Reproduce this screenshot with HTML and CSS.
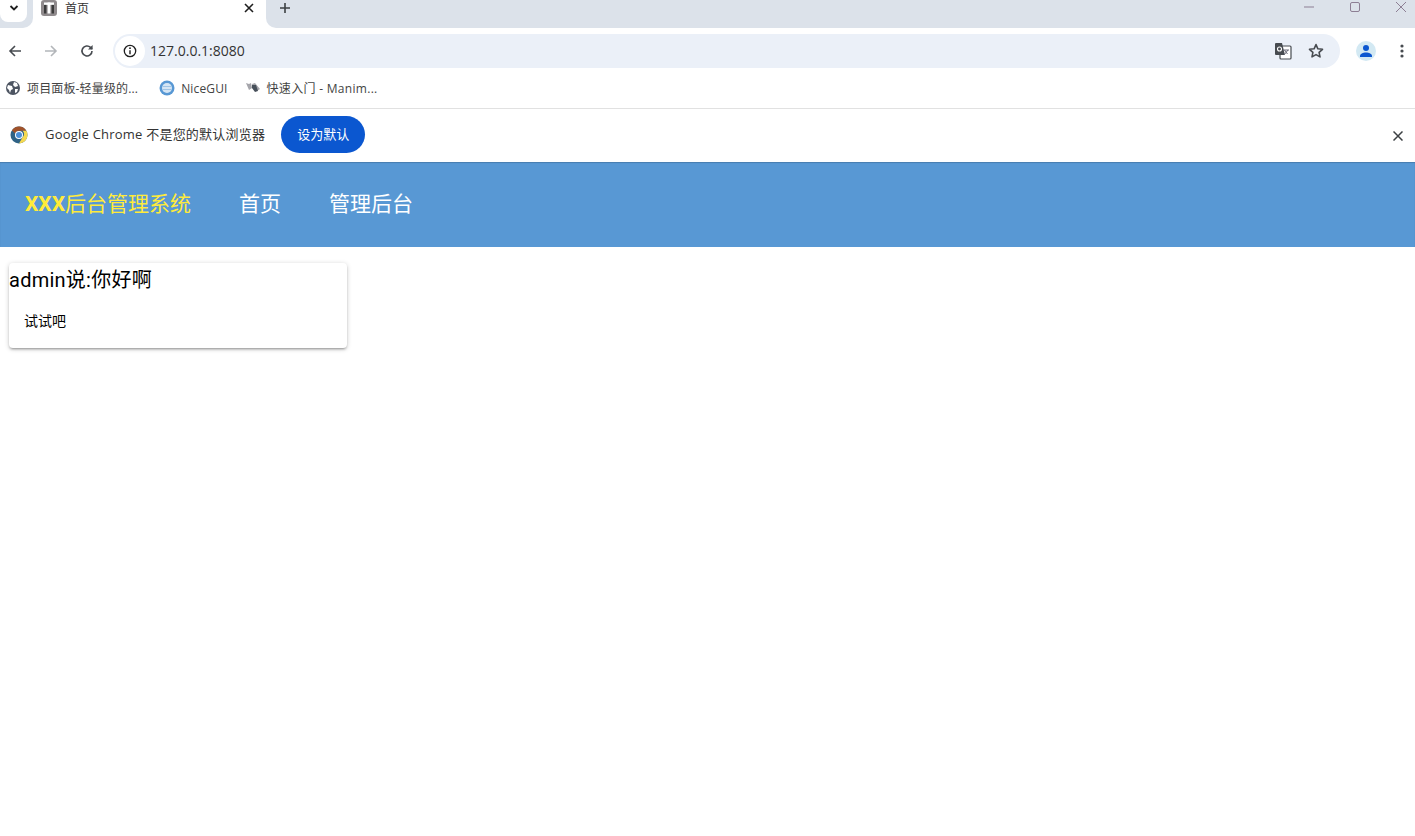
FILE: index.html
```html
<!DOCTYPE html>
<html lang="zh-CN">
<head>
<meta charset="utf-8">
<title>首页</title>
<link rel="stylesheet" href="styles.css">
</head>
<body>
<div class="tabstrip">
  <div class="tabsearch-wrap">
    <div class="tabsearch">
      <svg width="12" height="12" viewBox="0 0 12 12"><path d="M2.5 4 6 7.500 9.500 4" fill="none" stroke="#1f1f1f" stroke-width="1.800"/></svg>
    </div>
  </div>
  <div class="tab">
    <svg class="favicon" width="16" height="16" viewBox="0 0 16 16"><rect x="0" y="0" width="16" height="16" rx="3" fill="#8f8a8c"/><rect x="3" y="2.500" width="10" height="2.400" fill="#fff"/><rect x="6.600" y="2.500" width="2.800" height="11" fill="#fff"/><rect x="3" y="4.900" width="2.400" height="8.600" fill="#3b3b3b"/><rect x="10.600" y="4.900" width="2.400" height="8.600" fill="#3b3b3b"/></svg>
    <span class="tab-title">首页</span>
    <svg class="tab-close" width="10" height="10" viewBox="0 0 10 10"><path d="M1 1 9 9M9 1 1 9" stroke="#1f1f1f" stroke-width="1.600"/></svg>
  </div>
  <div class="strip-rest">
    <svg class="newtab" width="12" height="12" viewBox="0 0 12 12"><path d="M6 1v10M1 6h10" stroke="#3c4043" stroke-width="1.600"/></svg>
    <div class="winctrls">
      <svg width="12" height="12" viewBox="0 0 12 12"><path d="M1 6h10" stroke="#8d7f94" stroke-width="1"/></svg>
      <svg width="12" height="12" viewBox="0 0 12 12"><rect x="1.500" y="1.500" width="9" height="9" rx="1.500" fill="none" stroke="#8d7f94" stroke-width="1"/></svg>
      <svg width="12" height="12" viewBox="0 0 12 12"><path d="M1 1 11 11M11 1 1 11" stroke="#8d7f94" stroke-width="1"/></svg>
    </div>
  </div>
</div>

<div class="toolbar">
  <svg class="navicon" width="16" height="16" viewBox="0 0 16 16"><path d="M14 8H3M8 3 3 8l5 5" fill="none" stroke="#474b50" stroke-width="1.600"/></svg>
  <svg class="navicon" width="16" height="16" viewBox="0 0 16 16"><path d="M2 8h11M8 3l5 5-5 5" fill="none" stroke="#b3b6ba" stroke-width="1.600"/></svg>
  <svg class="navicon" width="16" height="16" viewBox="0 0 16 16"><path d="M13 8a5 5 0 1 1-1.500-3.600L13 6" fill="none" stroke="#474b50" stroke-width="1.600"/><path d="M13.600 2v4.600H9z" fill="#474b50"/></svg>
  <div class="omnibox">
    <div class="siteinfo">
      <svg width="14" height="14" viewBox="0 0 14 14"><circle cx="7" cy="7" r="5.700" fill="none" stroke="#1f1f1f" stroke-width="1.300"/><path d="M7 6.200v4" stroke="#1f1f1f" stroke-width="1.400"/><circle cx="7" cy="4.200" r=".9" fill="#1f1f1f"/></svg>
    </div>
    <span class="url">127.0.0.1:8080</span>
    <svg class="translate" width="18" height="18" viewBox="0 0 18 18"><rect x="6" y="4" width="11" height="13" rx="1" fill="#fff" stroke="#474b50" stroke-width="1.200"/><path d="M1 2a1 1 0 0 1 1-1h6l3 12H2a1 1 0 0 1-1-1z" fill="#474b50"/><circle cx="5.500" cy="7" r="2" fill="none" stroke="#fff" stroke-width="1.100"/><path d="M9 8h6M10.500 8l3 4M14 8l-4 5" stroke="#6b6b78" stroke-width="1"/></svg>
    <svg class="star" width="18" height="18" viewBox="0 0 18 18"><path d="M9 2.600l1.900 4.200 4.600.5-3.400 3.100.9 4.500-4-2.300-4 2.300.9-4.500-3.400-3.100 4.600-.5z" fill="none" stroke="#474b50" stroke-width="1.600" stroke-linejoin="round"/></svg>
  </div>
  <div class="avatar">
    <svg width="14" height="14" viewBox="0 0 14 14"><circle cx="7" cy="4" r="3" fill="#0b57d0"/><path d="M1 13v-1.200C1 9.800 4 8.400 7 8.400s6 1.400 6 3.400V13z" fill="#0b57d0"/></svg>
  </div>
  <svg class="menu" width="4" height="16" viewBox="0 0 4 16"><circle cx="2" cy="3" r="1.600" fill="#474b50"/><circle cx="2" cy="8" r="1.600" fill="#474b50"/><circle cx="2" cy="13" r="1.600" fill="#474b50"/></svg>
</div>

<div class="bookmarks">
  <div class="bm">
    <svg width="16" height="16" viewBox="0 0 16 16"><circle cx="8" cy="8" r="7" fill="#4d5562"/><path d="M3 5l4 1 1 3-2 1-1 3-1-3-2-2zM9 2l3 1 1 3-3 1-2-2zM10 9l3 0-1 3-2 1z" fill="#fff"/></svg>
    <span>项目面板-轻量级的...</span>
  </div>
  <div class="bm">
    <svg width="16" height="16" viewBox="0 0 16 16"><circle cx="8" cy="8" r="7.500" fill="#5898d4"/><circle cx="8" cy="8" r="5" fill="#d5e5f4"/><path d="M3.500 6.500h9M3.500 9.500h9" stroke="#9fc4e6" stroke-width="1"/></svg>
    <span>NiceGUI</span>
  </div>
  <div class="bm bm-manim">
    <svg width="16" height="16" viewBox="0 0 16 16"><path d="M1 3l3 1 2-1 1 5-3 2zM7 4l3-1 5 6-3 2-4-2z" fill="#a5a5ab"/><path d="M7 5l4 0 2 6-3 1-3-4z" fill="#47505a"/></svg>
    <span>快速入门 - Manim...</span>
  </div>
</div>

<div class="infobar">
  <svg class="chrome-logo" width="18" height="18" viewBox="0 0 18 18"><circle cx="9" cy="9" r="8.500" fill="#2f6285"/><path d="M9 .5a8.500 8.500 0 0 1 7.400 4.300H9a4.200 4.200 0 0 0-4 2.700L1.900 4.300A8.500 8.500 0 0 1 9 .5z" fill="#a0522a"/><path d="M16.400 4.800A8.500 8.500 0 0 1 9 17.500l3.600-6.300a4.200 4.200 0 0 0 0-6.400z" fill="#f6d94e"/><circle cx="9" cy="9" r="4" fill="#fff"/><circle cx="9" cy="9" r="3" fill="#4a8fd8"/></svg>
  <span class="info-text">Google Chrome 不是您的默认浏览器</span>
  <button class="default-btn">设为默认</button>
  <svg class="info-close" width="10" height="10" viewBox="0 0 10 10"><path d="M.5.5l9 9M9.500.5l-9 9" stroke="#3c4043" stroke-width="1.500"/></svg>
</div>

<header class="app-header">
  <a class="brand"><b>XXX</b>后台管理系统</a>
  <a class="nav-link">首页</a>
  <a class="nav-link">管理后台</a>
</header>

<main class="content">
  <section class="card">
    <div class="card-title">admin说:你好啊</div>
    <div class="card-body">试试吧</div>
  </section>
</main>
</body>
</html>
```

FILE: styles.css
```css
* { box-sizing: border-box; }
html, body { margin: 0; height: 100%; overflow: hidden; }
body {
  background: #fff;
  font-family: "Open Sans", "Noto Sans CJK SC", sans-serif;
  color: #1f1f1f;
}
svg { display: block; flex: none; }

.tabstrip {
  height: 28px;
  background: #fff;
  display: flex;
}
.tabsearch-wrap {
  width: 33px;
  height: 28px;
  background: #dce2ea;
  border-bottom-right-radius: 10px;
}
.tabsearch {
  width: 27px;
  height: 22px;
  background: #fff;
  border-radius: 0 0 8px 8px;
  display: flex;
  align-items: center;
  justify-content: center;
  padding-bottom: 6px;
}
.tab {
  width: 233px;
  height: 28px;
  display: flex;
  align-items: center;
  padding: 0 12px 12px 8px;
}
.tab-title { font-size: 12px; margin-left: 8px; flex: 1; color: #333; }
.strip-rest {
  flex: 1;
  height: 28px;
  background: #dce2ea;
  border-bottom-left-radius: 10px;
  display: flex;
  align-items: center;
  padding: 0 8px 12px 13px;
}
.winctrls {
  margin-left: auto;
  margin-top: -2px;
  display: flex;
  gap: 34px;
}

.toolbar {
  height: 46px;
  display: flex;
  align-items: center;
  padding-left: 7px;
  background: #fff;
}
.navicon { margin-right: 20px; }
.navicon:nth-child(3) { margin-right: 18px; }
.omnibox {
  width: 1227px;
  height: 34px;
  border-radius: 17px;
  background: #ebf0f8;
  display: flex;
  align-items: center;
  padding-left: 2px;
}
.siteinfo {
  width: 30px;
  height: 30px;
  border-radius: 50%;
  background: #fff;
  display: flex;
  align-items: center;
  justify-content: center;
}
.url { font-size: 14px; margin: -2px 0 0 5px; flex: 1; color: #333; }
.translate { margin-right: 15px; }
.star { margin-right: 15px; }
.avatar {
  width: 20px;
  height: 20px;
  margin-left: 16px;
  border-radius: 50%;
  background: #d3e9f3;
  display: flex;
  align-items: center;
  justify-content: center;
}
.menu { margin-left: 24px; }

.bookmarks {
  height: 35px;
  padding: 0 0 6px 5px;
  display: flex;
  align-items: center;
  gap: 20px;
  border-bottom: 1px solid #e1e1e1;
}
.bm {
  display: flex;
  align-items: center;
  gap: 6px;
  font-size: 12px;
  color: #444;
  letter-spacing: .15px;
}
.bm + .bm { margin-left: 1px; }
.bm-manim { gap: 6px; letter-spacing: .3px; }
.bm + .bm-manim { margin-left: -3px; }

.infobar {
  height: 53px;
  display: flex;
  align-items: center;
  padding: 0 0 3px 10px;
  background: #fff;
}
.chrome-logo { margin-top: 1px; }
.info-text { font-size: 13px; margin: -2px 0 0 17px; color: #333; letter-spacing: .22px; }
.default-btn {
  margin-left: 16px;
  width: 84px;
  height: 37px;
  border: 0;
  border-radius: 19px;
  padding: 0 0 2px;
  background: #0b57d0;
  color: #fff;
  font: 13px "Open Sans", "Noto Sans CJK SC", sans-serif;
}
.info-close { margin: 3px 12px 0 auto; }

.app-header {
  height: 85px;
  background: #5898d4;
  display: flex;
  align-items: center;
  gap: 48px;
  padding: 0 0 5px 25px;
  box-shadow: inset 0 1px 1px rgba(0,0,0,.18);
  font-family: Roboto, "Noto Sans CJK SC", sans-serif;
  font-size: 21px;
  color: #fff;
}
.brand { color: #ffeb3b; }
.brand b { font-weight: 700; }

.content {
  padding: 16px 0 0 9px;
  font-family: Roboto, "Noto Sans CJK SC", sans-serif;
}
.card {
  width: 338px;
  height: 85px;
  border-radius: 4px;
  background: #fff;
  box-shadow: 0 1px 5px rgba(0,0,0,.2), 0 2px 2px rgba(0,0,0,.14), 0 3px 1px -2px rgba(0,0,0,.12);
  color: #000;
}
.card-title { font-size: 20px; line-height: 33px; padding-top: 1px; letter-spacing: .25px; }
.card-body { font-size: 14px; padding: 16px 0 0 15px; line-height: 17px; }
```
